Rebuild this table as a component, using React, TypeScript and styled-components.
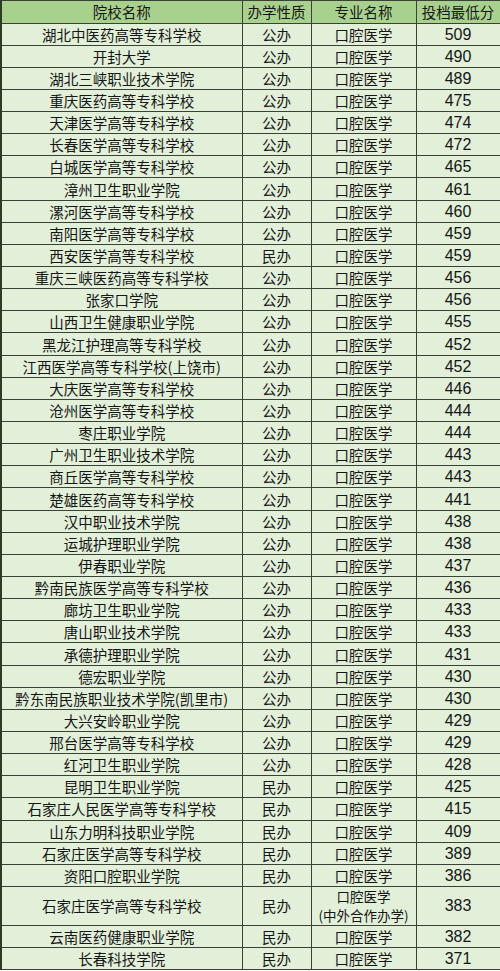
import React from 'react';
import styled, { createGlobalStyle } from 'styled-components';

const GlobalStyle = createGlobalStyle`
  html, body {
    margin: 0;
    padding: 0;
    background: #ffffff;
  }
`;

type Row = {
  school: string;
  kind: string;
  major: string;
  score: number;
  note?: string;
};

const rows: Row[] = [
  { school: '湖北中医药高等专科学校', kind: '公办', major: '口腔医学', score: 509 },
  { school: '开封大学', kind: '公办', major: '口腔医学', score: 490 },
  { school: '湖北三峡职业技术学院', kind: '公办', major: '口腔医学', score: 489 },
  { school: '重庆医药高等专科学校', kind: '公办', major: '口腔医学', score: 475 },
  { school: '天津医学高等专科学校', kind: '公办', major: '口腔医学', score: 474 },
  { school: '长春医学高等专科学校', kind: '公办', major: '口腔医学', score: 472 },
  { school: '白城医学高等专科学校', kind: '公办', major: '口腔医学', score: 465 },
  { school: '漳州卫生职业学院', kind: '公办', major: '口腔医学', score: 461 },
  { school: '漯河医学高等专科学校', kind: '公办', major: '口腔医学', score: 460 },
  { school: '南阳医学高等专科学校', kind: '公办', major: '口腔医学', score: 459 },
  { school: '西安医学高等专科学校', kind: '民办', major: '口腔医学', score: 459 },
  { school: '重庆三峡医药高等专科学校', kind: '公办', major: '口腔医学', score: 456 },
  { school: '张家口学院', kind: '公办', major: '口腔医学', score: 456 },
  { school: '山西卫生健康职业学院', kind: '公办', major: '口腔医学', score: 455 },
  { school: '黑龙江护理高等专科学校', kind: '公办', major: '口腔医学', score: 452 },
  { school: '江西医学高等专科学校(上饶市)', kind: '公办', major: '口腔医学', score: 452 },
  { school: '大庆医学高等专科学校', kind: '公办', major: '口腔医学', score: 446 },
  { school: '沧州医学高等专科学校', kind: '公办', major: '口腔医学', score: 444 },
  { school: '枣庄职业学院', kind: '公办', major: '口腔医学', score: 444 },
  { school: '广州卫生职业技术学院', kind: '公办', major: '口腔医学', score: 443 },
  { school: '商丘医学高等专科学校', kind: '公办', major: '口腔医学', score: 443 },
  { school: '楚雄医药高等专科学校', kind: '公办', major: '口腔医学', score: 441 },
  { school: '汉中职业技术学院', kind: '公办', major: '口腔医学', score: 438 },
  { school: '运城护理职业学院', kind: '公办', major: '口腔医学', score: 438 },
  { school: '伊春职业学院', kind: '公办', major: '口腔医学', score: 437 },
  { school: '黔南民族医学高等专科学校', kind: '公办', major: '口腔医学', score: 436 },
  { school: '廊坊卫生职业学院', kind: '公办', major: '口腔医学', score: 433 },
  { school: '唐山职业技术学院', kind: '公办', major: '口腔医学', score: 433 },
  { school: '承德护理职业学院', kind: '公办', major: '口腔医学', score: 431 },
  { school: '德宏职业学院', kind: '公办', major: '口腔医学', score: 430 },
  { school: '黔东南民族职业技术学院(凯里市)', kind: '公办', major: '口腔医学', score: 430 },
  { school: '大兴安岭职业学院', kind: '公办', major: '口腔医学', score: 429 },
  { school: '邢台医学高等专科学校', kind: '公办', major: '口腔医学', score: 429 },
  { school: '红河卫生职业学院', kind: '公办', major: '口腔医学', score: 428 },
  { school: '昆明卫生职业学院', kind: '民办', major: '口腔医学', score: 425 },
  { school: '石家庄人民医学高等专科学校', kind: '民办', major: '口腔医学', score: 415 },
  { school: '山东力明科技职业学院', kind: '民办', major: '口腔医学', score: 409 },
  { school: '石家庄医学高等专科学校', kind: '民办', major: '口腔医学', score: 389 },
  { school: '资阳口腔职业学院', kind: '民办', major: '口腔医学', score: 386 },
  { school: '石家庄医学高等专科学校', kind: '民办', major: '口腔医学', score: 383, note: '(中外合作办学)' },
  { school: '云南医药健康职业学院', kind: '民办', major: '口腔医学', score: 382 },
  { school: '长春科技学院', kind: '民办', major: '口腔医学', score: 371 },
];

const Table = styled.table`
  width: 499px;
  table-layout: fixed;
  border-collapse: collapse;
  border-left: 2px solid #2e3a2a;
  font-family: 'Noto Sans CJK SC', 'Noto Sans', sans-serif;
  color: #161616;
`;

const HeadRow = styled.tr`
  height: 22.5px;
  background: #a9d18e;
`;

const BodyRow = styled.tr<{ $tall?: boolean }>`
  height: ${(p) => (p.$tall ? '39px' : '22.15px')};
  background: #e2efd9;
`;

const HeadCell = styled.th`
  padding: 0;
  border: 1px solid #3a4236;
  font-weight: 400;
  font-size: 14.5px;
  line-height: 20px;
  text-align: center;
  white-space: nowrap;
`;

const Cell = styled.td`
  padding: 0;
  border: 1px solid #3a4236;
  font-size: 14.5px;
  line-height: 17px;
  text-align: center;
  white-space: nowrap;
  overflow: hidden;
`;

const ScoreCell = styled(Cell)`
  font-family: 'Liberation Sans', Arial, sans-serif;
  font-size: 16px;
`;

const Stack = styled.div`
  display: flex;
  flex-direction: column;
  align-items: center;
`;

const Line = styled.span`
  display: block;
  font-size: 13.5px;
  height: 19px;
  line-height: 19px;
`;

export default function App() {
  return (
    <>
      <GlobalStyle />
      <Table>
        <colgroup>
          <col style={{ width: 241 }} />
          <col style={{ width: 69 }} />
          <col style={{ width: 105 }} />
          <col style={{ width: 84 }} />
        </colgroup>
        <thead>
          <HeadRow>
            <HeadCell>院校名称</HeadCell>
            <HeadCell>办学性质</HeadCell>
            <HeadCell>专业名称</HeadCell>
            <HeadCell>投档最低分</HeadCell>
          </HeadRow>
        </thead>
        <tbody>
          {rows.map((r, i) => (
            <BodyRow key={i} $tall={!!r.note}>
              <Cell>{r.school}</Cell>
              <Cell>{r.kind}</Cell>
              <Cell>
                {r.note ? (
                  <Stack>
                    <Line>{r.major}</Line>
                    <Line>{r.note}</Line>
                  </Stack>
                ) : (
                  r.major
                )}
              </Cell>
              <ScoreCell>{r.score}</ScoreCell>
            </BodyRow>
          ))}
        </tbody>
      </Table>
    </>
  );
}
